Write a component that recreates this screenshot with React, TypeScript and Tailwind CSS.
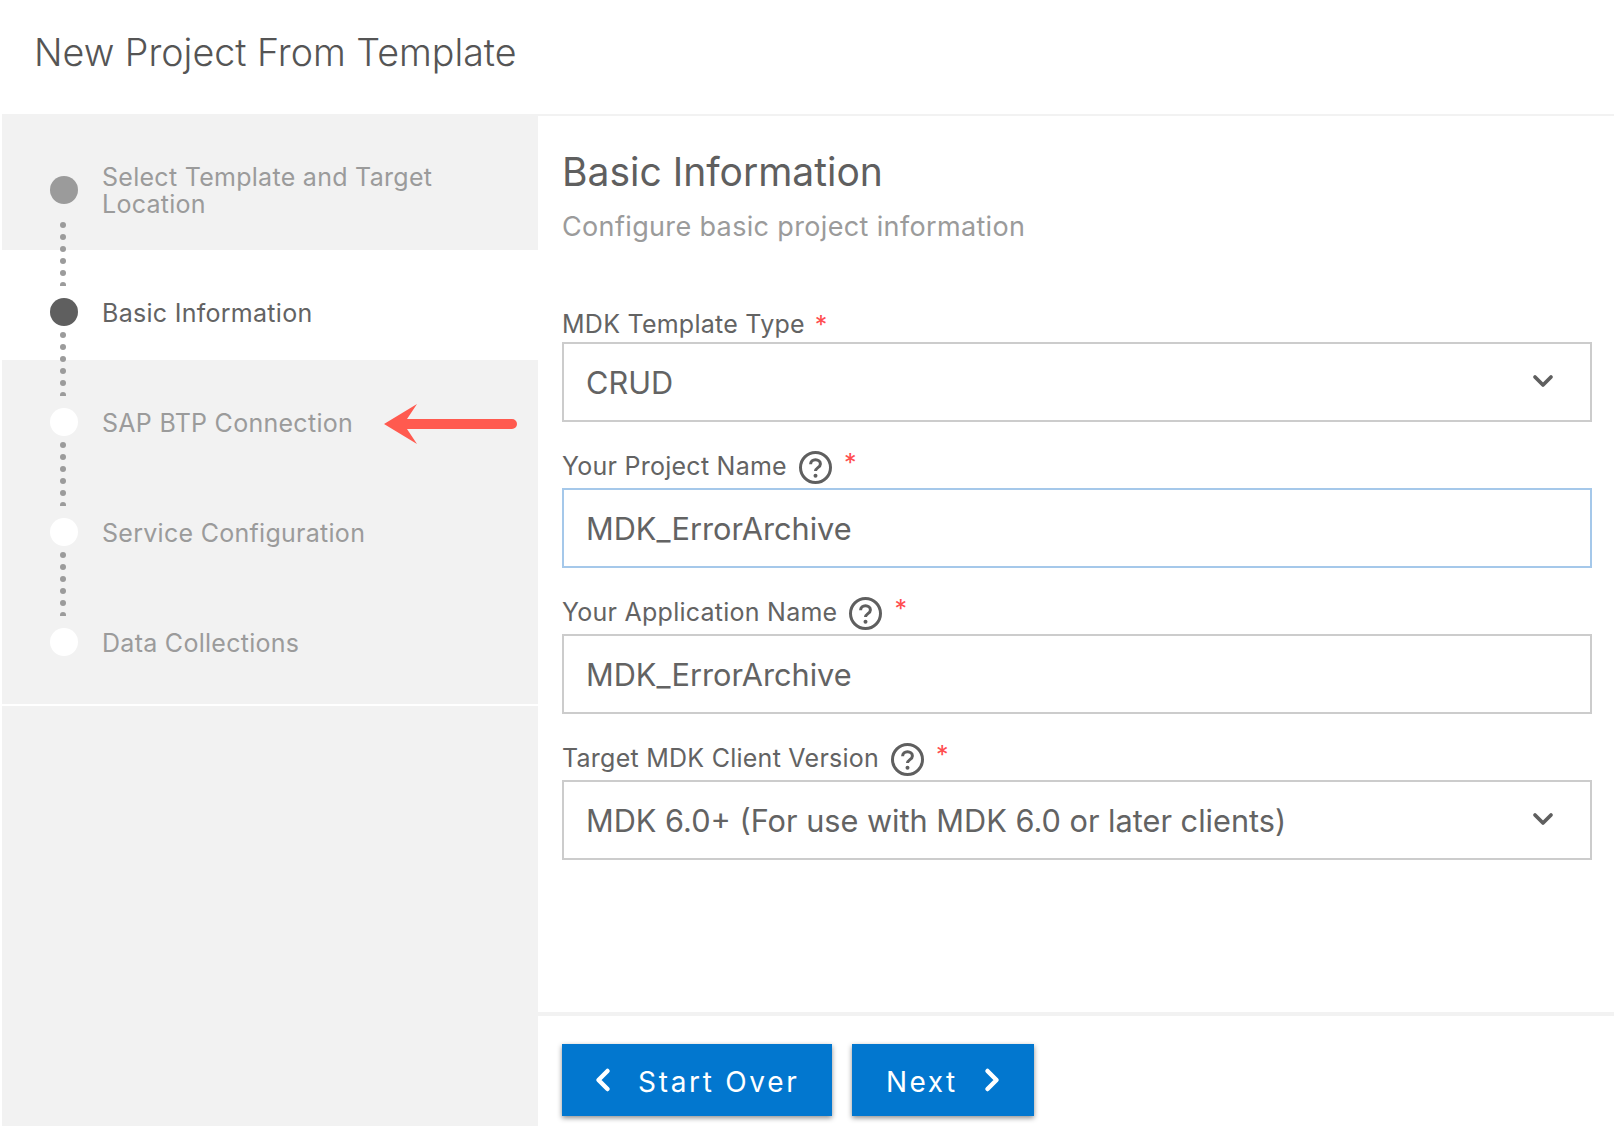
import React from 'react';
import { ChevronDown, ChevronLeft, ChevronRight } from 'lucide-react';

interface Step {
  label: string[];
  state: 'done' | 'current' | 'todo';
  rowClass: string;
  dotClass: string;
  labelClass: string;
  connector: boolean;
}

const steps: Step[] = [
  { label: ['Select Template and Target', 'Location'], state: 'done', rowClass: 'h-[136px] pt-[62px] bg-[#f2f2f2]', dotClass: 'top-[108px]', labelClass: 'mt-[-12px] leading-[26.5px]', connector: true },
  { label: ['Basic Information'], state: 'current', rowClass: 'h-[110px] pt-[48px] bg-white', dotClass: 'top-[82px]', labelClass: 'mt-[2px] leading-[26px]', connector: true },
  { label: ['SAP BTP Connection'], state: 'todo', rowClass: 'h-[110px] pt-[48px] bg-[#f2f2f2]', dotClass: 'top-[82px]', labelClass: 'mt-[2px] leading-[26px]', connector: true },
  { label: ['Service Configuration'], state: 'todo', rowClass: 'h-[110px] pt-[48px] bg-[#f2f2f2]', dotClass: 'top-[82px]', labelClass: 'mt-[2px] leading-[26px]', connector: true },
  { label: ['Data Collections'], state: 'todo', rowClass: 'h-[124px] pt-[48px] bg-[#f2f2f2]', dotClass: '', labelClass: 'mt-[2px] leading-[26px]', connector: false },
];

const circleColors = {
  done: 'bg-[#9b9b9b]',
  current: 'bg-[#5f5f5f]',
  todo: 'bg-white',
};

const HelpIcon = () => (
  <svg width="33" height="33" viewBox="0 0 33 33" fill="none" className="shrink-0">
    <circle cx="16.5" cy="16.5" r="15" stroke="#5f5f5f" strokeWidth="3" />
    <path d="M11.6 13.2c0-2.9 2.2-4.5 4.9-4.5s4.9 1.7 4.9 4.2c0 3.8-4.9 3.6-4.9 7.2" stroke="#5f5f5f" strokeWidth="3" />
    <circle cx="16.5" cy="24.8" r="2" fill="#5f5f5f" />
  </svg>
);

const Field = ({ label, value, help, select, focused }: { label: string; value: string; help?: boolean; select?: boolean; focused?: boolean }) => (
  <div className="mb-[-2px]">
    <div className="flex h-[42px] items-center text-[25px] tracking-[0.25px] text-[#636363]">
      <span className={help ? '' : 'mt-[8px]'}>{label}</span>
      {help && <span className="ml-3"><HelpIcon /></span>}
      <span className={`text-[#ff4d4f] ${help ? 'mb-[6px] ml-3' : 'ml-[10px] mt-[10px]'}`}>*</span>
    </div>
    <div className={`flex h-[80px] items-center justify-between border-2 bg-white pl-[22px] pr-[31px] text-[30.7px] text-[#636363] ${focused ? 'border-[#a5c8ea]' : 'border-[#cccccc]'}`}>
      <span className="mt-[2px]">{value}</span>
      {select && <ChevronDown size={32} strokeWidth={2.8} className="mb-[2px] text-[#5f5f5f]" />}
    </div>
  </div>
);

export default function App() {
  return (
    <div className="flex h-[1126px] w-[1614px] flex-col overflow-hidden bg-white text-[#5f5f5f]" style={{ fontFamily: 'Inter, "Liberation Sans", sans-serif' }}>
      <header className="flex h-[114px] shrink-0 items-center pb-2 pl-[34px] text-[37.6px] font-light text-[#555555]">
        New Project From Template
      </header>

      <div className="flex min-h-0 flex-1">
        {/* Steps */}
        <aside className="ml-[2px] flex w-[536px] shrink-0 flex-col bg-[#f2f2f2]">
          {steps.map((step) => (
            <div key={step.label[0]} className={`relative flex pl-[48px] ${step.rowClass}`}>
              <div className={`h-[28px] w-[28px] shrink-0 rounded-full ${circleColors[step.state]}`} />
              <div className={`ml-[24px] text-[25px] tracking-[0.28px] ${step.labelClass} ${step.state === 'current' ? 'text-[#636363]' : 'text-[#9b9b9b]'}`}>
                {step.label.map((line) => (
                  <div key={line}>{line}</div>
                ))}
              </div>
              {step.connector && (
                <div className={`absolute left-[58px] z-10 flex h-[64px] w-[6px] flex-col gap-[6px] overflow-hidden ${step.dotClass}`}>
                  {[0, 1, 2, 3, 4, 5].map((i) => (
                    <div key={i} className="h-[6px] w-[6px] shrink-0 rounded-full bg-[#9b9b9b]" />
                  ))}
                </div>
              )}
              {step.label[0] === 'SAP BTP Connection' && (
                <svg className="absolute left-[382px] top-[44px]" width="133" height="40" viewBox="0 0 133 40">
                  <path d="M0 20 L33 0 L23 15 H128 a5 5 0 0 1 0 10 H23 L33 40 Z" fill="#ff5a4f" />
                </svg>
              )}
            </div>
          ))}
          <div className="h-[2px] shrink-0 bg-white" />
        </aside>

        {/* Form */}
        <main className="flex min-w-0 flex-1 flex-col border-t-2 border-[#f2f2f2]">
          <div className="flex-1 pl-[24px] pr-[22px]">
            <h1 className="mt-[31px] text-[39px] font-normal leading-[50px] text-[#5f5f5f]">Basic Information</h1>
            <p className="mt-[10px] text-[27px] leading-[40px] tracking-[0.35px] text-[#9b9b9b]">Configure basic project information</p>
            <div className="mt-[53px] flex flex-col gap-[26px]">
              <Field label="MDK Template Type" value="CRUD" select />
              <Field label="Your Project Name" value="MDK_ErrorArchive" help focused />
              <Field label="Your Application Name" value="MDK_ErrorArchive" help />
              <Field label="Target MDK Client Version" value="MDK 6.0+ (For use with MDK 6.0 or later clients)" help select />
            </div>
          </div>
          <footer className="flex h-[114px] shrink-0 gap-[20px] border-t-4 border-[#f2f2f2] pl-[24px] pt-[28px]">
            <button className="flex h-[72px] w-[270px] items-center bg-[#0277cf] pl-[28px] text-[28px] tracking-[2.7px] text-white shadow-[0_2px_5px_rgba(0,0,0,0.45)]">
              <ChevronLeft size={36} strokeWidth={3} className="-ml-[5px]" />
              <span className="ml-[17px] mt-[3px]">Start Over</span>
            </button>
            <button className="flex h-[72px] w-[182px] items-center bg-[#0277cf] pl-[34px] text-[28px] tracking-[2.5px] text-white shadow-[0_2px_5px_rgba(0,0,0,0.45)]">
              <span className="mt-[3px]">Next</span>
              <ChevronRight size={36} strokeWidth={3} className="ml-[16px]" />
            </button>
          </footer>
        </main>
      </div>
    </div>
  );
}
